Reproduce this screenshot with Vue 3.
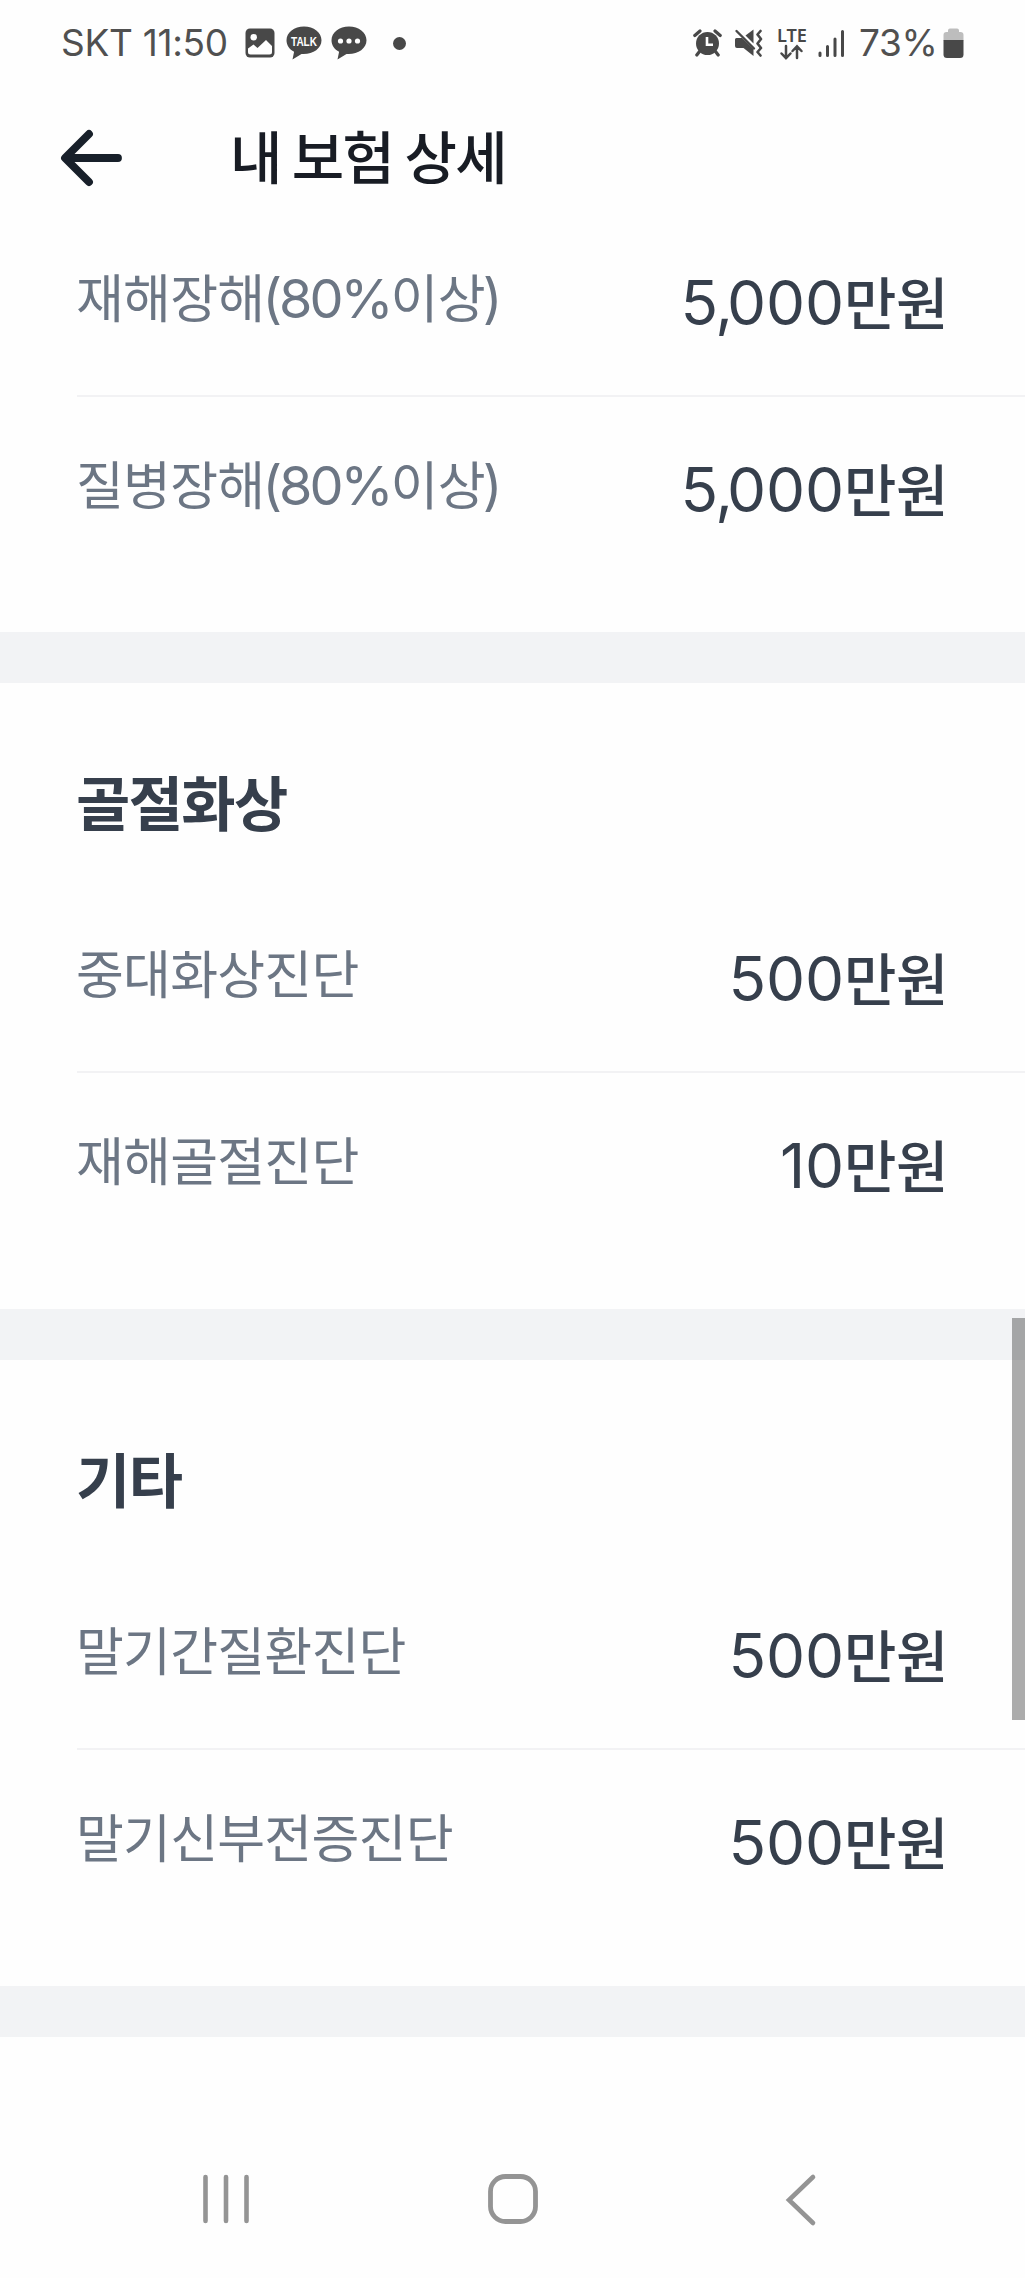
<script setup>
const sections = [
  {
    title: '',
    rows: [
      { label: [['재해장해', 0], ['(80%', 1], ['이상', 0], [')', 1]], num: ['5', ',', '000'] },
      { label: [['질병장해', 0], ['(80%', 1], ['이상', 0], [')', 1]], num: ['5', ',', '000'] },
    ],
  },
  {
    title: '골절화상',
    rows: [
      { label: [['중대화상진단', 0]], num: ['500'] },
      { label: [['재해골절진단', 0]], num: ['10'] },
    ],
  },
  {
    title: '기타',
    rows: [
      { label: [['말기간질환진단', 0]], num: ['500'] },
      { label: [['말기신부전증진단', 0]], num: ['500'] },
    ],
  },
]
</script>

<template>
  <div class="screen">
    <div class="status">
      <span class="carrier">SKT 11:50</span>
      <svg class="i-photo" width="30" height="30" viewBox="0 0 30 30">
        <rect x="0.5" y="0.5" width="29" height="29" rx="4.5" fill="#484848" />
        <circle cx="8.7" cy="9.2" r="3.2" fill="#fff" />
        <path d="M3 20.5 8.5 16.5 12.5 20 21 12 27 18V24Q27 26.5 24.5 26.5H5.500Q3 26.500 3 24Z" fill="#fff" />
      </svg>
      <svg class="i-talk" width="36" height="35" viewBox="0 0 36 35">
        <path d="M18 .5C8.300.5.5 6.500.5 14.200c0 5 3 9.100 7.600 11.600L6.500 33.500l9-5.600c11 .8 20-5.200 20-13.700C35.500 6.500 27.700.5 18 .5Z" fill="#484848" />
        <text x="18" y="19.500" text-anchor="middle" textLength="26" lengthAdjust="spacingAndGlyphs" class="talk">TALK</text>
      </svg>
      <svg class="i-chat" width="36" height="35" viewBox="0 0 36 35">
        <path d="M18 .5C8.300.5.5 6.500.5 14.200c0 5 3 9.100 7.600 11.600L6.500 33.500l9-5.600c11 .8 20-5.200 20-13.700C35.500 6.500 27.700.5 18 .5Z" fill="#484848" />
        <circle cx="9.500" cy="15" r="2.600" fill="#fff" />
        <circle cx="18" cy="15" r="2.600" fill="#fff" />
        <circle cx="26.500" cy="15" r="2.600" fill="#fff" />
      </svg>
      <span class="more"></span>
      <span class="fill"></span>
      <svg class="i-alarm" width="29" height="28" viewBox="0 0 29 28">
        <circle cx="14.500" cy="14.500" r="11.500" fill="#484848" />
        <path d="M1.800 6.500 7 2M27.200 6.500 22 2M6.500 22.500 3.800 26M22.500 22.500 25.200 26" stroke="#484848" stroke-width="3.200" stroke-linecap="round" />
        <path d="M14 8V15.800H20" fill="none" stroke="#fff" stroke-width="2.600" />
      </svg>
      <svg class="i-mute" width="30" height="28" viewBox="0 0 30 28">
        <path d="M1 10.500Q1 9 2.500 9H8L19.500 20V27L9.500 19H3Q1 19 1 17Z" fill="#484848" />
        <path d="M11.500 6.500 19.500.5V14.500Z" fill="#484848" />
        <path d="M2.500 2 20 19.500" stroke="#484848" stroke-width="2.400" stroke-linecap="round" />
        <path d="M26.500 2 23.500 5.500 27 10 23.500 14.500 27 19 23.500 23 26.500 26.500" fill="none" stroke="#484848" stroke-width="2.600" stroke-linecap="round" stroke-linejoin="round" />
      </svg>
      <svg class="i-lte" width="32" height="44" viewBox="0 -4 32 44">
        <text x="1" y="17" textLength="30" lengthAdjust="spacingAndGlyphs" class="lte">LTE</text>
        <path d="M10 21V33M5.500 28.500 10 33.200 14.500 28.500M21 33V22M16.500 26 21 21.300 25.500 26" fill="none" stroke="#484848" stroke-width="2.500" stroke-linecap="round" />
      </svg>
      <svg class="i-signal" width="27" height="29" viewBox="0 0 27 29">
        <path d="M2 24V26.500M9.500 17.500V26.500M17 10V26.500M24.500 2.500V26.500" stroke="#484848" stroke-width="3" stroke-linecap="round" />
      </svg>
      <span class="percent">73%</span>
      <svg class="i-battery" width="21" height="31" viewBox="0 0 21 31">
        <path d="M0.500 12.500V7Q.5 4 3.500 4H5V2.500Q5 .5 7 .5H14Q16 .5 16 2.500V4H17.500Q20.500 4 20.500 7V12.500Z" fill="#bdbdbd" />
        <path d="M.5 12H20.500V26.500Q20.500 30 17 30H4Q.5 30 .5 26.500Z" fill="#484848" />
      </svg>
    </div>

    <header class="appbar">
      <svg width="64" height="58" viewBox="0 0 64 58">
        <path d="M29 5 5 29 29 53M6 29H58" fill="none" stroke="#18202a" stroke-width="7.800" stroke-linecap="round" stroke-linejoin="round" />
      </svg>
      <h1>내 보험 상세</h1>
    </header>

    <main>
      <section v-for="(s, i) in sections" :key="i">
        <h2 v-if="s.title">{{ s.title }}</h2>
        <div v-for="(r, j) in s.rows" :key="j" class="row">
          <div class="label"><span v-for="(p, k) in r.label" :key="k" :class="{ lat: p[1] }">{{ p[0] }}</span></div>
          <div class="value"><span v-for="(n, k) in r.num" :key="k" class="num" :class="{ comma: n === ',' }">{{ n }}</span><span class="unit">만원</span></div>
        </div>
      </section>
      <div class="thumb"></div>
    </main>

    <nav>
      <svg class="n-recent" width="48" height="52" viewBox="0 0 48 52">
        <path d="M3.500 4V48M24 4V48M44.500 4V48" stroke="#949494" stroke-width="4.600" stroke-linecap="round" />
      </svg>
      <svg class="n-home" width="52" height="52" viewBox="0 0 52 52">
        <rect x="3.500" y="3.500" width="45" height="45" rx="15" fill="none" stroke="#949494" stroke-width="4.800" />
      </svg>
      <svg class="n-back" width="32" height="54" viewBox="0 0 32 54">
        <path d="M28 4 4 27 28 50" fill="none" stroke="#949494" stroke-width="4.600" stroke-linecap="round" />
      </svg>
    </nav>
  </div>
</template>

<style>
body {
  margin: 0;
  background: #fefefe;
}
</style>

<style scoped>
.screen {
  width: 1025px;
  height: 2278px;
  display: flex;
  flex-direction: column;
  background: #fefefe;
  overflow: hidden;
  font-family: "Noto Sans CJK KR", sans-serif;
}
.screen svg {
  display: block;
  flex: none;
}
.status {
  height: 86px;
  display: flex;
  align-items: center;
  padding: 0 61px 0 61px;
  box-sizing: border-box;
  color: #505050;
  font: 400 37px/86px Inter, sans-serif;
}
.carrier {
  width: 184px;
  white-space: nowrap;
  letter-spacing: -0.300px;
}
.i-talk {
  margin-left: 11px;
}
.i-chat {
  margin-left: 9px;
}
.talk {
  font: 700 12.500px "Liberation Sans", sans-serif;
  fill: #fff;
}
.more {
  width: 13px;
  height: 13px;
  margin-left: 26px;
  border-radius: 50%;
  background: #484848;
}
.fill {
  flex: 1;
}
.i-alarm {
  margin-right: 12px;
}
.i-mute {
  margin-right: 12px;
}
.i-lte {
  margin-right: 10px;
}
.lte {
  font: 600 18.500px "Noto Sans", sans-serif;
  fill: #484848;
}
.i-signal {
  margin-right: 14px;
}
.percent {
  width: 84px;
  white-space: nowrap;
  letter-spacing: -0.300px;
}
.appbar {
  height: 124px;
  display: flex;
  align-items: flex-start;
  padding: 0 0 0 60px;
}
.appbar svg {
  margin-top: 43px;
}
h1 {
  margin: 28px 0 0 106px;
  color: #181c24;
  font-size: 57px;
  line-height: 80px;
  font-weight: 500;
  letter-spacing: -1.700px;
  white-space: nowrap;
}
main {
  position: relative;
  height: 1827px;
}
section {
  box-sizing: border-box;
  height: 677px;
  border-bottom: 51px solid #f2f3f5;
}
section:first-child {
  height: 473px;
}
h2 {
  margin: 0;
  height: 203px;
  padding: 77px 0 0 76px;
  box-sizing: border-box;
  color: #363f4c;
  font-size: 59px;
  line-height: 82px;
  font-weight: 700;
  letter-spacing: -1.600px;
}
.row {
  box-sizing: border-box;
  height: 187px;
  margin-left: 77px;
  padding-right: 77px;
  display: flex;
  justify-content: space-between;
  align-items: flex-start;
  white-space: nowrap;
  border-bottom: 2px solid #f2f2f4;
}
.row:last-child {
  border-bottom: 0;
}
.label {
  padding-top: 46px;
  margin-left: -1px;
  color: #6c7684;
  font-size: 52px;
  line-height: 80px;
  letter-spacing: -0.750px;
}
.lat {
  margin-left: -2px;
  font-family: Inter, sans-serif;
  font-size: 54px;
  font-weight: 400;
  line-height: 1;
  letter-spacing: -3px;
}
.value {
  padding-top: 50px;
  color: #363f4c;
  font-size: 57px;
  line-height: 80px;
  font-weight: 500;
}
.unit {
  letter-spacing: -0.500px;
}
.num {
  font-family: Inter, sans-serif;
  font-size: 62px;
  font-weight: 400;
  line-height: 1;
  letter-spacing: -0.100px;
}
.comma {
  margin-left: -3px;
  letter-spacing: -6px;
}
.thumb {
  position: absolute;
  right: 0;
  top: 1108px;
  width: 13px;
  height: 402px;
  background: rgba(0, 0, 0, 0.320);
}
nav {
  flex: 1;
  display: flex;
  align-items: flex-start;
  padding: 136px 0 0 202px;
}
.n-home {
  margin-left: 237px;
}
.n-back {
  margin-left: 246px;
}
</style>
